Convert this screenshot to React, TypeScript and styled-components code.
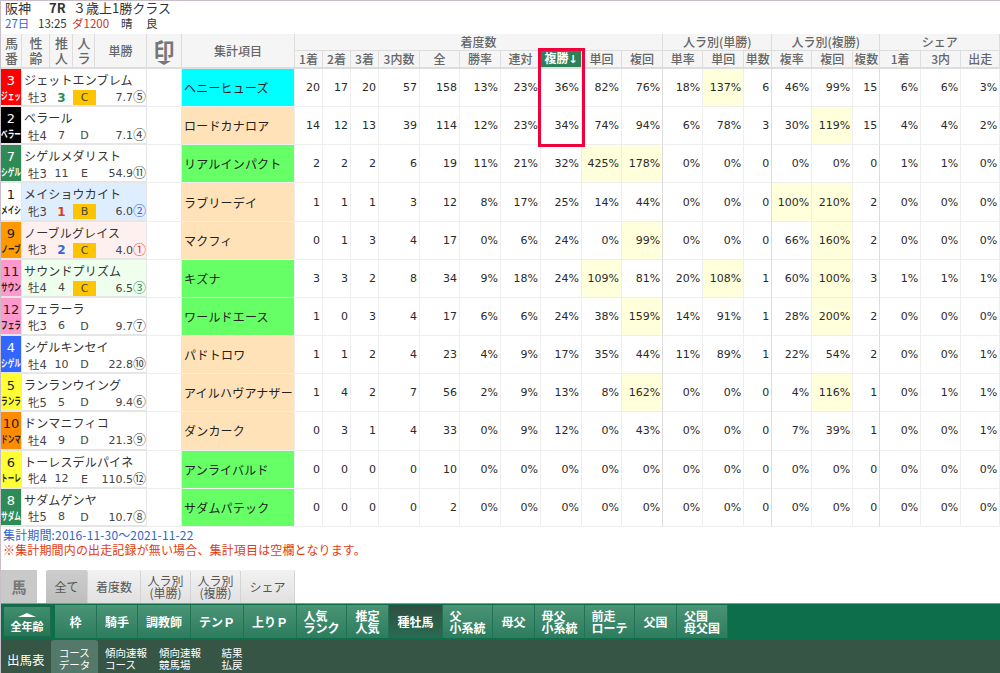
import React from 'react';
import styled, { createGlobalStyle } from 'styled-components';

const GlobalStyle = createGlobalStyle`
  html, body {
    margin: 0;
    padding: 0;
    background: #fff;
  }
  body {
    font-family: "Noto Sans CJK JP", "DejaVu Sans", sans-serif;
    color: #333;
  }
`;

const CJK = '"Noto Sans CJK JP", sans-serif';
const NUM = '"DejaVu Sans", "Noto Sans CJK JP", sans-serif';

const Page = styled.div`
  width: 1000px;
  height: 673px;
  box-sizing: border-box;
  border-top: 1px solid #c9bfc9;
  border-left: 1px solid #c9bfc9;
  overflow: hidden;
  display: flex;
  flex-direction: column;
`;

const RaceHead = styled.div`
  height: 33px;
  flex: none;
  box-sizing: border-box;
  padding-left: 4px;
`;

const TitleLine = styled.div`
  display: flex;
  height: 14px;
  line-height: 14px;
  font-size: 13px;
  color: #333;
`;

const TitleItem = styled.span<{ $w: number }>`
  width: ${p => p.$w}px;
  flex: none;
`;

const InfoLine = styled.div`
  display: flex;
  height: 16px;
  line-height: 16px;
  font-size: 11.5px;
`;

const InfoItem = styled.span<{ $w: number; $c?: string }>`
  width: ${p => p.$w}px;
  flex: none;
  color: ${p => p.$c || '#333'};
`;

const Table = styled.table`
  table-layout: fixed;
  width: 999px;
  flex: none;
  border-collapse: separate;
  border-spacing: 0;
`;

const HeadCell = styled.th<{ $active?: boolean; $small?: boolean }>`
  position: relative;
  padding: 0;
  box-sizing: border-box;
  height: ${p => (p.$small ? 18 : 17)}px;
  background: ${p => (p.$active ? '#2e8059' : '#f5f5f5')};
  color: ${p => (p.$active ? '#fff' : '#666')};
  font-family: ${CJK};
  font-size: 12px;
  font-weight: ${p => (p.$active ? 700 : 500)};
  line-height: 14px;
  text-align: center;
  border-right: 1px solid #ddd;
  border-bottom: 2px solid #ddd;
`;

const GroupCell = styled(HeadCell)`
  border-bottom: 1px solid #ddd;
  font-size: 12px;
`;

const SideHeadText = styled.span`
  display: block;
  width: 12px;
  margin: -2px auto 0;
  font-size: 13px;
  line-height: 15px;
`;

const ActiveArrow = styled.span`
  font-family: "DejaVu Sans", sans-serif;
  font-size: 11px;
`;

const StampHead = styled.div`
  display: flex;
  flex-direction: column;
  align-items: center;
  font-size: 21px;
  font-weight: 700;
  line-height: 24px;
  color: #777;
`;

const StampArrow = styled.i`
  width: 0;
  height: 0;
  border-left: 7px solid transparent;
  border-right: 7px solid transparent;
  border-top: 4px solid #777;
`;

const RedFrame = styled.div`
  position: absolute;
  top: -3px;
  left: -3px;
  width: 47px;
  height: 99px;
  box-sizing: border-box;
  border: 3px solid #f0003c;
  pointer-events: none;
  z-index: 2;
`;

const FrameCell = styled.td<{ $bg: string; $fg: string }>`
  padding: 3px 0 0;
  height: 38.17px;
  box-sizing: border-box;
  vertical-align: top;
  background: ${p => p.$bg};
  color: ${p => p.$fg};
  text-align: center;
  border-right: 1px solid #e6e6e6;
  border-bottom: 2px solid #e6e6e6;
  overflow: hidden;
`;

const FrameNo = styled.div`
  font-family: ${NUM};
  font-size: 13px;
  line-height: 17px;
`;

const FrameName = styled.div`
  margin: 0 -8px;
  font-size: 10px;
  line-height: 13px;
  font-weight: 700;
  white-space: nowrap;
  transform: scaleX(0.66);
  transform-origin: center;
`;

const HorseCell = styled.td<{ $bg?: string }>`
  padding: 2px 0 0;
  box-sizing: border-box;
  vertical-align: top;
  background: ${p => p.$bg || '#fff'};
  border-right: 1px solid #e6e6e6;
  box-shadow: inset 0 -2px 0 #e6e6e6;
  overflow: hidden;
`;

const HorseName = styled.div`
  padding-left: 2px;
  font-size: 12px;
  line-height: 17px;
  letter-spacing: 0.15px;
  color: #333;
  white-space: nowrap;
`;

const HorseMeta = styled.div`
  display: grid;
  grid-template-columns: 28px 23px 24px 1fr;
  align-items: center;
  height: 16px;
  margin-top: 1px;
  font-size: 12px;
  line-height: 16px;
  color: #444;
`;

const SexAge = styled.span`
  padding-left: 6px;
  white-space: nowrap;
  font-family: ${NUM};
  font-size: 11.5px;
`;

const Mark = styled.span<{ $c?: string }>`
  text-align: center;
  font-family: ${NUM};
  font-size: ${p => (p.$c ? 12 : 11)}px;
  font-weight: ${p => (p.$c ? 700 : 400)};
  color: ${p => p.$c || '#444'};
`;

const Rating = styled.span<{ $on: boolean }>`
  width: 23px;
  height: 15px;
  line-height: 15px;
  text-align: center;
  font-family: ${NUM};
  font-size: 11px;
  background: ${p => (p.$on ? '#ffc400' : 'transparent')};
  color: #444;
`;

const Odds = styled.span`
  text-align: right;
  font-family: ${NUM};
  font-size: 11px;
  white-space: nowrap;
`;

const Rank = styled.span<{ $c?: string }>`
  font-family: ${CJK};
  font-size: 13px;
  line-height: 13px;
  color: ${p => p.$c || '#444'};
`;

const BlankCell = styled.td`
  padding: 0;
  border-right: 1px solid #e6e6e6;
  border-bottom: 1px solid #eee;
`;

const SireCell = styled.td<{ $bg: string }>`
  padding: 0 0 0 2px;
  box-sizing: border-box;
  background: ${p => p.$bg};
  font-size: 12px;
  letter-spacing: 0.2px;
  color: #222;
  white-space: nowrap;
  overflow: hidden;
  border-right: 1px solid #eee;
  border-bottom: 1px solid #eee;
`;

const Stat = styled.td<{ $hot?: boolean; $strong?: boolean }>`
  padding: 0 2px 0 0;
  box-sizing: border-box;
  background: ${p => (p.$hot ? '#ffffdc' : '#fff')};
  text-align: right;
  font-family: ${NUM};
  font-size: 11px;
  color: #2a2a2a;
  border-right: 1px solid ${p => (p.$strong ? '#ddd' : '#eee')};
  border-bottom: 1px solid #eee;
`;

const Notes = styled.div`
  height: 43px;
  flex: none;
  box-sizing: border-box;
  padding: 0 0 0 2px;
  font-size: 12px;
  line-height: 15px;
  letter-spacing: 0.15px;
`;

const NoteLine = styled.div<{ $c: string }>`
  color: ${p => p.$c};
`;

const TabRow = styled.div`
  display: flex;
  flex: none;
  align-items: flex-start;
  height: 33px;
`;

const HorseTab = styled.div`
  width: 36px;
  height: 34px;
  margin-right: 9px;
  background: #c9c9c9;
  color: #777;
  font-size: 15px;
  font-weight: 700;
  line-height: 34px;
  text-align: center;
`;

const TabGroup = styled.div`
  display: flex;
`;

const Tab = styled.div<{ $w: number; $on?: boolean }>`
  width: ${p => p.$w}px;
  height: 34px;
  box-sizing: border-box;
  display: flex;
  align-items: center;
  justify-content: center;
  text-align: center;
  font-size: 12px;
  line-height: 12px;
  color: #555;
  border-right: 1px solid #d4d4d4;
  border-radius: 2px 2px 0 0;
  background: ${p => (p.$on ? 'linear-gradient(#cdcdcd, #bdbdbd)' : 'linear-gradient(#f2f2f2, #e0e0e0)')};
  white-space: pre-line;
`;

const MainNav = styled.div`
  display: flex;
  flex: none;
  align-items: center;
  height: 37px;
  box-sizing: border-box;
  padding-left: 2px;
  background: #0c6e4a;
  border-top: 1px solid #6aa68f;
`;

const AgeButton = styled.div`
  width: 48px;
  height: 31px;
  margin-right: 4px;
  box-sizing: border-box;
  background: linear-gradient(#3f8e6c, #267557);
  border: 1px solid #1d6a4d;
  display: flex;
  flex-direction: column;
  align-items: center;
  color: #fff;
  font-size: 11px;
  font-weight: 700;
  line-height: 12px;
`;

const AgeArrow = styled.i`
  width: 0;
  height: 0;
  margin: 6px 0 3px;
  border-left: 9px solid transparent;
  border-right: 9px solid transparent;
  border-bottom: 4px solid #fff;
`;

const NavButton = styled.div<{ $w: number; $on?: boolean }>`
  width: ${p => p.$w}px;
  height: 33px;
  flex: none;
  box-sizing: border-box;
  display: flex;
  align-items: center;
  justify-content: center;
  font-size: 12px;
  font-weight: 700;
  line-height: 12px;
  color: #fff;
  white-space: pre-line;
  text-align: left;
  border-right: 1px solid #1f7354;
  background: ${p => (p.$on ? 'linear-gradient(#2f4f42, #2a6b52)' : 'linear-gradient(#4b9476, #2d7c5e)')};
`;

const SubNav = styled.div`
  display: flex;
  flex: 1;
  align-items: stretch;
  padding-left: 6px;
  background: #365544;
`;

const SubTitle = styled.div`
  width: 44px;
  display: flex;
  align-items: center;
  color: #fff;
  font-size: 12.5px;
  padding-top: 6px;
  box-sizing: border-box;
`;

const SubItem = styled.div<{ $w: number; $on?: boolean; $mr?: number }>`
  width: ${p => p.$w}px;
  margin-right: ${p => p.$mr || 0}px;
  display: flex;
  align-items: center;
  justify-content: center;
  text-align: left;
  white-space: pre-line;
  font-size: 10.5px;
  line-height: 12px;
  padding-top: 6px;
  box-sizing: border-box;
  color: #fff;
  border-radius: 3px 3px 0 0;
  background: ${p => (p.$on ? '#54796a' : 'transparent')};
`;

const colWidths = [21, 28, 23, 22, 52, 35, 113, 28, 28, 28, 41, 40, 41, 40, 41, 40, 41, 40, 41, 28, 40, 41, 27, 41, 40, 39];

const subHeads = ['1着', '2着', '3着', '3内数', '全', '勝率', '連対', '複勝', '単回', '複回', '単率', '単回', '単数', '複率', '複回', '複数', '1着', '3内', '出走'];

// index of the last column of each group gets the darker divider
const groupEnds = [9, 12, 15];

const CREAM = '#ffe2b8';
const GREEN = '#66ff66';
const CYAN = '#00ffff';

type Row = {
  no: number;
  short: string;
  frameBg: string;
  frameFg: string;
  name: string;
  sex: string;
  pop: string;
  popColor?: string;
  rate: string;
  odds: string;
  rank: string;
  rankColor?: string;
  rowBg?: string;
  sire: string;
  sireBg: string;
  stats: string;
};

// a trailing * marks a highlighted stat
const rows: Row[] = [
  { no: 3, short: 'ジェッ', frameBg: '#ff0000', frameFg: '#fff', name: 'ジェットエンブレム', sex: '牡3', pop: '3', popColor: '#2e8b57', rate: 'C', odds: '7.7', rank: '⑤', sire: 'ヘニーヒューズ', sireBg: CYAN, stats: '20 17 20 57 158 13% 23% 36% 82% 76% 18% 137%* 6 46% 99% 15 6% 6% 3%' },
  { no: 2, short: 'ベラー', frameBg: '#000', frameFg: '#fff', name: 'ベラール', sex: '牡4', pop: '7', rate: 'D', odds: '7.1', rank: '④', sire: 'ロードカナロア', sireBg: CREAM, stats: '14 12 13 39 114 12% 23% 34% 74% 94% 6% 78% 3 30% 119%* 15 4% 4% 2%' },
  { no: 7, short: 'シゲル', frameBg: '#2e8b57', frameFg: '#fff', name: 'シゲルメダリスト', sex: '牡3', pop: '11', rate: 'E', odds: '54.9', rank: '⑪', sire: 'リアルインパクト', sireBg: GREEN, stats: '2 2 2 6 19 11% 21% 32% 425%* 178%* 0% 0% 0 0% 0% 0 1% 1% 0%' },
  { no: 1, short: 'メイシ', frameBg: '#fff', frameFg: '#222', name: 'メイショウカイト', sex: '牝3', pop: '1', popColor: '#e63b10', rate: 'B', odds: '6.0', rank: '②', rankColor: '#3366dd', rowBg: '#deeeff', sire: 'ラブリーデイ', sireBg: CREAM, stats: '1 1 1 3 12 8% 17% 25% 14% 44% 0% 0% 0 100%* 210%* 2 0% 0% 0%' },
  { no: 9, short: 'ノーブ', frameBg: '#ff9900', frameFg: '#222', name: 'ノーブルグレイス', sex: '牝3', pop: '2', popColor: '#3366dd', rate: 'C', odds: '4.0', rank: '①', rankColor: '#e63b10', rowBg: '#fff0f0', sire: 'マクフィ', sireBg: CREAM, stats: '0 1 3 4 17 0% 6% 24% 0% 99%* 0% 0% 0 66% 160%* 2 0% 0% 0%' },
  { no: 11, short: 'サウン', frameBg: '#ff99cc', frameFg: '#222', name: 'サウンドプリズム', sex: '牡4', pop: '4', rate: 'C', odds: '6.5', rank: '③', rankColor: '#2e8b57', rowBg: '#eeffee', sire: 'キズナ', sireBg: GREEN, stats: '3 3 2 8 34 9% 18% 24% 109%* 81% 20% 108%* 1 60% 100%* 3 1% 1% 1%' },
  { no: 12, short: 'フェラ', frameBg: '#ff99cc', frameFg: '#222', name: 'フェラーラ', sex: '牝3', pop: '6', rate: 'D', odds: '9.7', rank: '⑦', sire: 'ワールドエース', sireBg: GREEN, stats: '1 0 3 4 17 6% 6% 24% 38% 159%* 14% 91% 1 28% 200%* 2 0% 0% 0%' },
  { no: 4, short: 'シゲル', frameBg: '#3366ff', frameFg: '#fff', name: 'シゲルキンセイ', sex: '牡4', pop: '10', rate: 'D', odds: '22.8', rank: '⑩', sire: 'パドトロワ', sireBg: CREAM, stats: '1 1 2 4 23 4% 9% 17% 35% 44% 11% 89% 1 22% 54% 2 0% 0% 1%' },
  { no: 5, short: 'ランラ', frameBg: '#ffff33', frameFg: '#222', name: 'ランランウイング', sex: '牝5', pop: '5', rate: 'D', odds: '9.4', rank: '⑥', sire: 'アイルハヴアナザー', sireBg: CREAM, stats: '1 4 2 7 56 2% 9% 13% 8% 162%* 0% 0% 0 4% 116%* 1 0% 1% 1%' },
  { no: 10, short: 'ドンマ', frameBg: '#ff8c00', frameFg: '#222', name: 'ドンマニフィコ', sex: '牡4', pop: '9', rate: 'D', odds: '21.3', rank: '⑨', sire: 'ダンカーク', sireBg: CREAM, stats: '0 3 1 4 33 0% 9% 12% 0% 43% 0% 0% 0 7% 39% 1 0% 0% 1%' },
  { no: 6, short: 'トーレ', frameBg: '#ffff33', frameFg: '#222', name: 'トーレスデルパイネ', sex: '牝4', pop: '12', rate: 'E', odds: '110.5', rank: '⑫', sire: 'アンライバルド', sireBg: GREEN, stats: '0 0 0 0 10 0% 0% 0% 0% 0% 0% 0% 0 0% 0% 0 0% 0% 0%' },
  { no: 8, short: 'サダム', frameBg: '#2e8b57', frameFg: '#fff', name: 'サダムゲンヤ', sex: '牡5', pop: '8', rate: 'D', odds: '10.7', rank: '⑧', sire: 'サダムパテック', sireBg: GREEN, stats: '0 0 0 0 2 0% 0% 0% 0% 0% 0% 0% 0 0% 0% 0 0% 0% 0%' },
];

const tabs = [
  { label: '全て', w: 42, on: true },
  { label: '着度数', w: 53 },
  { label: '人ラ別\n(単勝)', w: 50 },
  { label: '人ラ別\n(複勝)', w: 50 },
  { label: 'シェア', w: 54 },
];

const navItems = [
  { label: '枠', w: 42 },
  { label: '騎手', w: 41 },
  { label: '調教師', w: 53 },
  { label: 'テンＰ', w: 53 },
  { label: '上りＰ', w: 53 },
  { label: '人気\nランク', w: 50 },
  { label: '推定\n人気', w: 42 },
  { label: '種牡馬', w: 54, on: true },
  { label: '父\n小系統', w: 50 },
  { label: '母父', w: 42 },
  { label: '母父\n小系統', w: 50 },
  { label: '前走\nローテ', w: 50 },
  { label: '父国', w: 42 },
  { label: '父国\n母父国', w: 51 },
];

const App: React.FC = () => {
  return (
    <Page>
      <GlobalStyle />
      <RaceHead>
        <TitleLine>
          <TitleItem $w={44}>阪神</TitleItem>
          <TitleItem $w={24}><b>7R</b></TitleItem>
          <TitleItem $w={120}>３歳上1勝クラス</TitleItem>
        </TitleLine>
        <InfoLine>
          <InfoItem $w={33} $c="#3366dd">27日</InfoItem>
          <InfoItem $w={34}>13:25</InfoItem>
          <InfoItem $w={49} $c="#c8342c">ダ1200</InfoItem>
          <InfoItem $w={25}>晴</InfoItem>
          <InfoItem $w={20}>良</InfoItem>
        </InfoLine>
      </RaceHead>
      <Table>
        <colgroup>
          {colWidths.map((w, i) => (
            <col key={i} style={{ width: w }} />
          ))}
        </colgroup>
        <thead>
          <tr>
            <HeadCell rowSpan={2}><SideHeadText>馬番</SideHeadText></HeadCell>
            <HeadCell rowSpan={2}><SideHeadText>性齢</SideHeadText></HeadCell>
            <HeadCell rowSpan={2}><SideHeadText>推人</SideHeadText></HeadCell>
            <HeadCell rowSpan={2}><SideHeadText>人ラ</SideHeadText></HeadCell>
            <HeadCell rowSpan={2}>単勝</HeadCell>
            <HeadCell rowSpan={2}>
              <StampHead>印<StampArrow /></StampHead>
            </HeadCell>
            <HeadCell rowSpan={2}>集計項目</HeadCell>
            <GroupCell colSpan={10}>着度数</GroupCell>
            <GroupCell colSpan={3}>人ラ別(単勝)</GroupCell>
            <GroupCell colSpan={3}>人ラ別(複勝)</GroupCell>
            <GroupCell colSpan={3}>シェア</GroupCell>
          </tr>
          <tr>
            {subHeads.map((h, i) => (
              <HeadCell key={i} $small $active={i === 7}>
                {h}
                {i === 7 && <ActiveArrow>↓</ActiveArrow>}
                {i === 7 && <RedFrame />}
              </HeadCell>
            ))}
          </tr>
        </thead>
        <tbody>
          {rows.map(r => (
            <tr key={r.no}>
              <FrameCell $bg={r.frameBg} $fg={r.frameFg}>
                <FrameNo>{r.no}</FrameNo>
                <FrameName>{r.short}</FrameName>
              </FrameCell>
              <HorseCell colSpan={4} $bg={r.rowBg}>
                <HorseName>{r.name}</HorseName>
                <HorseMeta>
                  <SexAge>{r.sex}</SexAge>
                  <Mark $c={r.popColor}>{r.pop}</Mark>
                  <Rating $on={r.rate === 'B' || r.rate === 'C'}>{r.rate}</Rating>
                  <Odds>{r.odds}<Rank $c={r.rankColor}>{r.rank}</Rank></Odds>
                </HorseMeta>
              </HorseCell>
              <BlankCell />
              <SireCell $bg={r.sireBg}>{r.sire}</SireCell>
              {r.stats.split(' ').map((s, i) => (
                <Stat key={i} $hot={s.endsWith('*')} $strong={groupEnds.includes(i)}>
                  {s.replace('*', '')}
                </Stat>
              ))}
            </tr>
          ))}
        </tbody>
      </Table>
      <Notes>
        <NoteLine $c="#3366cc">集計期間:2016-11-30～2021-11-22</NoteLine>
        <NoteLine $c="#e63b10">※集計期間内の出走記録が無い場合、集計項目は空欄となります。</NoteLine>
      </Notes>
      <TabRow>
        <HorseTab>馬</HorseTab>
        <TabGroup>
          {tabs.map(t => (
            <Tab key={t.label} $w={t.w} $on={t.on}>{t.label}</Tab>
          ))}
        </TabGroup>
      </TabRow>
      <MainNav>
        <AgeButton><AgeArrow />全年齢</AgeButton>
        {navItems.map(n => (
          <NavButton key={n.label} $w={n.w} $on={n.on}>{n.label}</NavButton>
        ))}
      </MainNav>
      <SubNav>
        <SubTitle>出馬表</SubTitle>
        <SubItem $w={47} $on $mr={6}>{'コース\nデータ'}</SubItem>
        <SubItem $w={44} $mr={10}>{'傾向速報\nコース'}</SubItem>
        <SubItem $w={44} $mr={18}>{'傾向速報\n競馬場'}</SubItem>
        <SubItem $w={24}>{'結果\n払戻'}</SubItem>
      </SubNav>
    </Page>
  );
};

export default App;
